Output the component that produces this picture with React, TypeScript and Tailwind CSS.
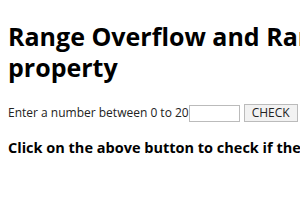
export default function App() {
  return (
    <div className="min-h-[210px] overflow-hidden bg-white px-2 text-black" style={{ fontFamily: "'Open Sans', 'Noto Sans', sans-serif" }}>
      <h1 className="pt-[21px] text-[25px] font-bold leading-[31px] whitespace-nowrap">
        Range Overflow and Range
        <br />
        property
      </h1>
      <div className="mt-[21px] flex items-center whitespace-nowrap text-[12px] text-[#222]">
        <span>Enter a number between 0 to 20</span>
        <input type="number" className="h-[17px] w-[51px] border border-[#bbb] bg-white" />
        <button className="ml-[4px] h-[18px] border border-[#bbb] bg-[#f2f2f2] px-[7px] text-[12px] leading-none">CHECK</button>
      </div>
      <p className="mt-[15px] whitespace-nowrap text-[14.5px] font-bold">
        Click on the above button to check if the input is valid
      </p>
    </div>
  );
}
